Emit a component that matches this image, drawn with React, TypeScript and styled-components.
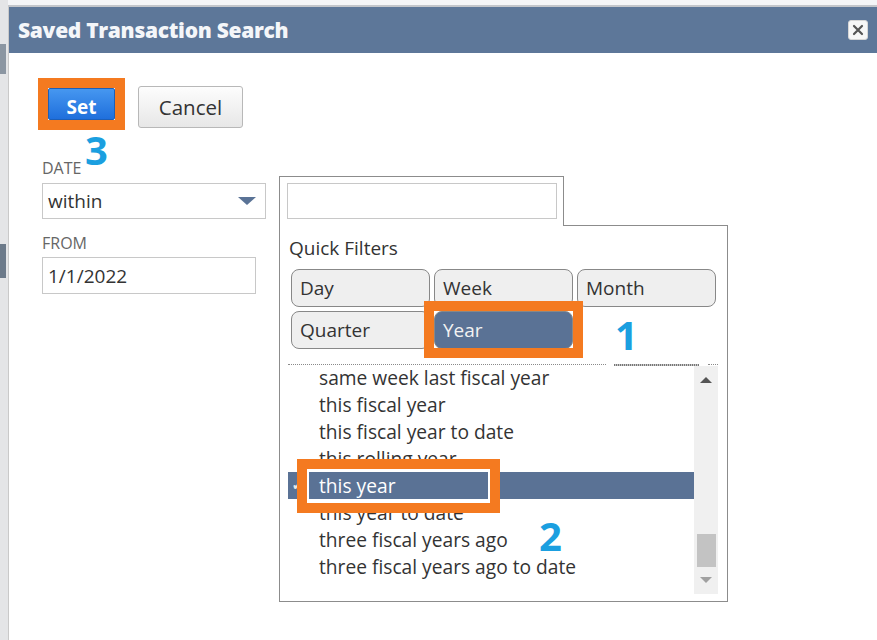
import React from "react";
import styled, { createGlobalStyle } from "styled-components";

const GlobalStyle = createGlobalStyle`
  html, body {
    margin: 0;
    padding: 0;
    background: #f4f5f7;
  }
  body {
    font-family: "Open Sans", "Liberation Sans", sans-serif;
    color: #333;
  }
`;

const Page = styled.div`
  display: flex;
  height: 640px;
  overflow: hidden;
`;

const Backdrop = styled.div`
  width: 8px;
  background: #e4e5e7;
  display: flex;
  flex-direction: column;
  padding-top: 44px;
  gap: 170px;
`;

const BackdropMark = styled.div<{ $h: number; $c: string }>`
  height: ${(p) => p.$h}px;
  width: 6px;
  background: ${(p) => p.$c};
`;

const Dialog = styled.div`
  flex: 1;
  margin-top: 5px;
  border-top: 2px solid #c3c6cb;
  border-left: 1px solid #c9c9c9;
  background: #fff;
  display: flex;
  flex-direction: column;
`;

const Header = styled.div`
  height: 46px;
  background: #5d7799;
  display: flex;
  align-items: center;
  justify-content: space-between;
  padding: 0 9px;
`;

const Title = styled.div`
  font-weight: 800;
  font-size: 21px;
  color: #f4f6f9;
  letter-spacing: -0.3px;
`;

const CloseBox = styled.div`
  width: 20px;
  height: 20px;
  box-sizing: border-box;
  background: #f7f7f7;
  border: 1px solid #d6d6d6;
  border-radius: 3px;
  display: flex;
  align-items: center;
  justify-content: center;
`;

const Content = styled.div`
  padding: 25px 0 0 29px;
`;

const ButtonRow = styled.div`
  position: relative;
  display: flex;
  align-items: flex-start;
`;

const Highlight = styled.div`
  border: 10px solid #f47a20;
  display: inline-flex;
`;

const SetButton = styled.button`
  width: 67px;
  height: 32px;
  border: 1px solid #1d5fb8;
  border-radius: 2px;
  background: linear-gradient(#4697f0, #1f6fdc);
  color: #fff;
  font-family: "Open Sans", "Liberation Sans", sans-serif;
  font-weight: 700;
  font-size: 19px;
  padding: 5px 0 0;
  line-height: 24px;
`;

const CancelButton = styled.button`
  margin: 8px 0 0 13px;
  width: 105px;
  height: 42px;
  border: 1px solid #b8b8b8;
  border-radius: 3px;
  background: linear-gradient(#fdfdfd, #e7e7e7);
  color: #333;
  font-family: "Open Sans", "Liberation Sans", sans-serif;
  font-size: 20.5px;
  padding: 0;
`;

const Step = styled.span<{ $top: number; $left: number }>`
  position: absolute;
  top: ${(p) => p.$top}px;
  left: ${(p) => p.$left}px;
  font-family: "Open Sans", "Liberation Sans", sans-serif;
  font-weight: 700;
  font-size: 40px;
  line-height: 1;
  color: #1b9fe0;
  z-index: 3;
`;

const FormRow = styled.div`
  display: flex;
  align-items: flex-start;
  margin-top: 28px;
`;

const LeftColumn = styled.div`
  width: 224px;
  margin-left: 4px;
`;

const Label = styled.div<{ $gap?: number }>`
  font-size: 16px;
  line-height: 20px;
  color: #666;
  text-transform: uppercase;
  margin-top: ${(p) => p.$gap ?? 0}px;
`;

const SelectBox = styled.div`
  margin-top: 5px;
  height: 36px;
  box-sizing: border-box;
  border: 1px solid #c8c8c8;
  display: flex;
  align-items: center;
  justify-content: space-between;
  padding: 0 9px 0 5px;
  font-size: 19px;
  color: #333;
`;

const TextBox = styled.div<{ $w: number }>`
  margin-top: 4px;
  width: ${(p) => p.$w}px;
  height: 37px;
  box-sizing: border-box;
  border: 1px solid #c8c8c8;
  display: flex;
  align-items: center;
  padding-left: 5px;
  font-size: 19px;
  color: #333;
`;

const Popup = styled.div`
  width: 449px;
  margin: 18px 0 0 13px;
  display: flex;
  flex-direction: column;
`;

const Tab = styled.div`
  width: 285px;
  height: 50px;
  box-sizing: border-box;
  border: 1px solid #8c8c8c;
  border-bottom: none;
  background: #fff;
  padding: 6px 0 0 7px;
  position: relative;
  z-index: 1;
  margin-bottom: -1px;
`;

const TabInput = styled.div`
  width: 270px;
  height: 36px;
  box-sizing: border-box;
  border: 1px solid #c8c8c8;
`;

const PopBody = styled.div`
  position: relative;
  height: 377px;
  box-sizing: border-box;
  border: 1px solid #8c8c8c;
  padding: 9px 9px 7px 8px;
  display: flex;
  flex-direction: column;
`;

const FiltersTitle = styled.div`
  font-size: 19px;
  line-height: 26px;
  margin-left: 1px;
  color: #333;
`;

const FilterGrid = styled.div`
  margin: 8px 0 0 3px;
  display: grid;
  grid-template-columns: repeat(3, 139px);
  grid-auto-rows: 38px;
  gap: 4px;
`;

const FilterButton = styled.div<{ $active?: boolean }>`
  box-sizing: border-box;
  border: 1px solid #888;
  border-radius: 8px;
  background: ${(p) => (p.$active ? "#5a7295" : "#efefef")};
  color: ${(p) => (p.$active ? "#f2f2f2" : "#333")};
  font-size: 19px;
  display: flex;
  align-items: center;
  padding-left: 8px;
`;

const Separator = styled.div`
  margin-top: 15px;
  height: 2px;
  display: flex;
  align-items: flex-start;
`;

const SepDots = styled.div<{ $w?: number }>`
  ${(p) => (p.$w ? `width: ${p.$w}px;` : "flex: 1;")}
  border-top: 1px dotted #8a8a8a;
`;

const SepDense = styled.div`
  width: 85px;
  height: 2px;
  margin: 0 9px 0 8px;
  background: repeating-linear-gradient(90deg, #777 0 1px, #c8c8c8 1px 2px);
`;

const ListArea = styled.div`
  flex: 1;
  display: flex;
  margin-top: -2px;
  overflow: hidden;
`;

const Items = styled.div`
  flex: 1;
`;

const Row = styled.div<{ $selected?: boolean }>`
  position: relative;
  height: 27px;
  line-height: 27px;
  padding-left: 31px;
  font-size: 19.2px;
  white-space: nowrap;
  background: ${(p) => (p.$selected ? "#5a7295" : "transparent")};
  color: ${(p) => (p.$selected ? "#fff" : "#333")};
`;

const Check = styled.span`
  position: absolute;
  left: 4px;
  top: 0;
  font-size: 13px;
  color: #e8e8e8;
`;

const ScrollTrack = styled.div`
  width: 24px;
  margin-top: 2px;
  background: #f0f0f0;
  display: flex;
  flex-direction: column;
  align-items: center;
`;

const Arrow = styled.svg<{ $m: string }>`
  margin: ${(p) => p.$m};
  flex-shrink: 0;
`;

const Spacer = styled.div`
  flex: 1;
`;

const Thumb = styled.div`
  width: 19px;
  height: 33px;
  background: #c3c3c3;
`;

const Frame = styled.div<{ $top: number; $left: number; $w: number; $h: number; $inner?: boolean }>`
  position: absolute;
  top: ${(p) => p.$top}px;
  left: ${(p) => p.$left}px;
  width: ${(p) => p.$w}px;
  height: ${(p) => p.$h}px;
  box-sizing: border-box;
  border: 10px solid #f47a20;
  box-shadow: ${(p) => (p.$inner ? "inset 0 0 0 2px #fff" : "none")};
  z-index: 2;
`;

const listItems = [
  "same week last fiscal year",
  "this fiscal year",
  "this fiscal year to date",
  "this rolling year",
  "this year",
  "this year to date",
  "three fiscal years ago",
  "three fiscal years ago to date",
];

const filters = ["Day", "Week", "Month", "Quarter", "Year"];

const App: React.FC = () => {
  return (
    <>
      <GlobalStyle />
      <Page>
        <Backdrop>
          <BackdropMark $h={30} $c="#8b96a2" />
          <BackdropMark $h={34} $c="#6c7a8a" />
        </Backdrop>
        <Dialog>
          <Header>
            <Title>Saved Transaction Search</Title>
            <CloseBox>
              <svg width="12" height="12" viewBox="0 0 12 12">
                <path d="M2 2 L10 10 M10 2 L2 10" stroke="#555" strokeWidth="2.2" strokeLinecap="round" />
              </svg>
            </CloseBox>
          </Header>
          <Content>
            <ButtonRow>
              <Highlight>
                <SetButton>Set</SetButton>
              </Highlight>
              <CancelButton>Cancel</CancelButton>
              <Step $top={52} $left={47}>3</Step>
            </ButtonRow>
            <FormRow>
              <LeftColumn>
                <Label>Date</Label>
                <SelectBox>
                  <span>within</span>
                  <svg width="18" height="8" viewBox="0 0 18 8">
                    <path d="M0 0 H18 L9 8 Z" fill="#5a7396" />
                  </svg>
                </SelectBox>
                <Label $gap={14}>From</Label>
                <TextBox $w={214}>1/1/2022</TextBox>
              </LeftColumn>
              <Popup>
                <Tab>
                  <TabInput />
                </Tab>
                <PopBody>
                  <FiltersTitle>Quick Filters</FiltersTitle>
                  <FilterGrid>
                    {filters.map((f) => (
                      <FilterButton key={f} $active={f === "Year"}>
                        {f}
                      </FilterButton>
                    ))}
                  </FilterGrid>
                  <Separator>
                    <SepDots />
                    <SepDense />
                    <SepDots $w={10} />
                  </Separator>
                  <ListArea>
                    <Items>
                      {listItems.map((item) => (
                        <Row key={item} $selected={item === "this year"}>
                          {item === "this year" && <Check>✔</Check>}
                          {item}
                        </Row>
                      ))}
                    </Items>
                    <ScrollTrack>
                      <Arrow $m="11px 0 0" width="12" height="6" viewBox="0 0 12 6">
                        <path d="M0 6 L6 0 L12 6 Z" fill="#555" />
                      </Arrow>
                      <Spacer />
                      <Thumb />
                      <Arrow $m="10px 0 11px" width="12" height="6" viewBox="0 0 12 6">
                        <path d="M0 0 H12 L6 6 Z" fill="#a0a0a0" />
                      </Arrow>
                    </ScrollTrack>
                  </ListArea>
                  <Frame $top={75} $left={144} $w={159} $h={57} />
                  <Frame $top={233} $left={17} $w={203} $h={54} $inner />
                  <Step $top={89} $left={335}>1</Step>
                  <Step $top={290} $left={259}>2</Step>
                </PopBody>
              </Popup>
            </FormRow>
          </Content>
        </Dialog>
      </Page>
    </>
  );
};

export default App;
